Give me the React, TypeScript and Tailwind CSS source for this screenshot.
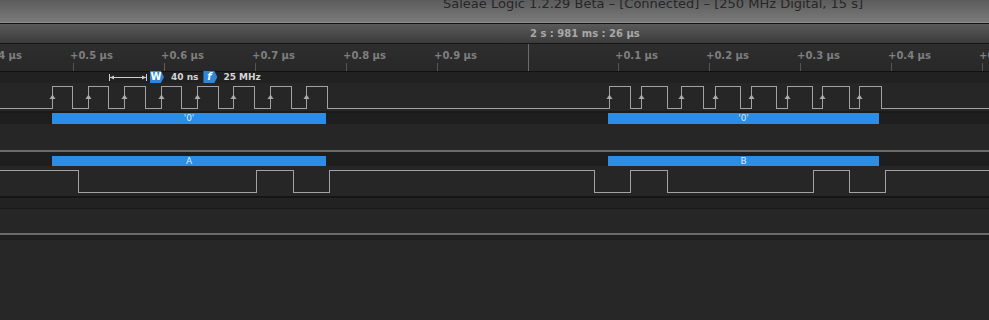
import React from "react";

const WIDTH = 989;

// toggle points (x) of each trace, taken from the capture
const clockEdges = [
  52, 72, 88, 108, 124, 145, 161, 181, 197, 218, 233, 254, 270, 291, 306, 327,
  609, 630, 641, 667, 681, 703, 715, 740, 751, 776, 787, 812, 822, 849, 859, 881,
];
const dataEdges = [78, 256, 293, 329, 594, 630, 667, 813, 849, 885];

function wavePath(edges: number[], startHigh: boolean, hi: number, lo: number) {
  let level = startHigh;
  let d = `M0 ${level ? hi : lo}`;
  for (const x of edges) {
    level = !level;
    d += ` H${x + 0.5} V${level ? hi : lo}`;
  }
  return d + ` H${WIDTH}`;
}

const ticks = [
  { label: "+0.4 µs" },
  { label: "+0.5 µs" },
  { label: "+0.6 µs" },
  { label: "+0.7 µs" },
  { label: "+0.8 µs" },
  { label: "+0.9 µs" },
  { label: "", cursor: true },
  { label: "+0.1 µs" },
  { label: "+0.2 µs" },
  { label: "+0.3 µs" },
  { label: "+0.4 µs" },
  { label: "+0.5 µs" },
];

function Ruler() {
  return (
    <div className="flex h-[27px] bg-gradient-to-b from-[#2e2e2e] to-[#282828] overflow-hidden">
      {ticks.map((t, i) => (
        <div
          key={i}
          className={`relative flex flex-col shrink-0 h-full ${i === 0 ? "-ml-[18px]" : ""} ${t.cursor ? "w-[90px]" : "w-[91px]"}`}
        >
          {t.cursor ? (
            <div className="w-px h-full bg-[#6c6c6c]" />
          ) : (
            <>
              <span className="mt-[7px] -ml-[3px] text-[10px] leading-[10px] font-bold text-[#7f7f7f] whitespace-nowrap">
                {t.label}
              </span>
              <div className={`mt-auto w-px h-[8px] ${i === 2 ? "bg-[#6b5a48]" : "bg-[#555555]"}`} />
            </>
          )}
        </div>
      ))}
    </div>
  );
}

function Badge({ children, italic }: { children: React.ReactNode; italic?: boolean }) {
  return (
    <div
      className={`flex items-center justify-center w-[14px] h-[12px] pr-[2px] bg-[#2d86d8] text-white text-[10px] font-bold leading-none [clip-path:polygon(0_0,78%_0,100%_50%,78%_100%,0_100%)] ${italic ? "italic" : ""}`}
    >
      {children}
    </div>
  );
}

function Measure() {
  return (
    <div className="flex items-center h-[11px] bg-[#212121] pl-[109px] text-[9px] font-bold text-[#d4d4d4]">
      <svg width="38" height="7" viewBox="0 0 38 7">
        <path d="M0.5 0 V7 M37.5 0 V7 M1 3.5 H37" stroke="#cfcfcf" strokeWidth="1" />
        <path d="M1 3.5 L5 1.5 V5.5 Z M37 3.5 L33 1.5 V5.5 Z" fill="#cfcfcf" />
      </svg>
      <div className="ml-[3px] -mt-[1px]">
        <Badge>W</Badge>
      </div>
      <span className="ml-[7px]">40 ns</span>
      <div className="ml-[5px] -mt-[1px]">
        <Badge italic>f</Badge>
      </div>
      <span className="ml-[6px]">25 MHz</span>
    </div>
  );
}

function ClockTrace() {
  const rising = clockEdges.filter((_, i) => i % 2 === 0);
  return (
    <svg width={WIDTH} height="28" className="block" shapeRendering="crispEdges">
      <path d={wavePath(clockEdges, false, 3.5, 25.5)} fill="none" stroke="#a2a2a2" strokeWidth="1" />
      {rising.map((x) => (
        <path
          key={x}
          d={`M${x + 0.5} 11.5 L${x + 3.5} 16 H${x - 2.5} Z`}
          fill="#ababab"
          shapeRendering="auto"
        />
      ))}
    </svg>
  );
}

function DataTrace() {
  return (
    <svg width={WIDTH} height="30" className="block" shapeRendering="crispEdges">
      <path d={wavePath(dataEdges, true, 4.5, 26.5)} fill="none" stroke="#a2a2a2" strokeWidth="1" />
    </svg>
  );
}

function Frame({ width, label }: { width: string; label: string }) {
  return (
    <div
      className={`${width} shrink-0 h-full bg-[#2b8de6] flex items-center justify-center text-[9px] leading-none text-[#d9ecff]`}
    >
      {label}
    </div>
  );
}

export default function App() {
  return (
    <div
      className="w-[989px] h-[320px] overflow-hidden flex flex-col bg-[#262626]"
      style={{ fontFamily: '"DejaVu Sans", "Liberation Sans", sans-serif' }}
    >
      {/* window title */}
      <div className="h-[22px] shrink-0 bg-gradient-to-b from-[#5c5c5c] to-[#7a7a7a] pl-[443px] overflow-hidden">
        <div className="-mt-[3px] text-[13px] leading-[13px] text-[#262626] whitespace-nowrap">
          Saleae Logic 1.2.29 Beta – [Connected] – [250 MHz Digital, 15 s]
        </div>
      </div>
      <div className="h-px bg-[#8c8c8c]" />
      <div className="h-px bg-[#121212]" />

      {/* time header */}
      <div className="h-[19px] shrink-0 bg-gradient-to-b from-[#5a5a5a] to-[#3b3b3b] pl-[530px] flex items-center">
        <span className="text-[10px] leading-none font-bold text-[#a8a8a8] whitespace-nowrap">
          2 s : 981 ms : 26 µs
        </span>
      </div>
      <div className="h-px bg-[#151515]" />

      <Ruler />
      <div className="h-px bg-[#111111]" />
      <Measure />

      {/* channel 0: clock */}
      <div className="h-[28px] shrink-0">
        <ClockTrace />
      </div>
      <div className="h-[2px] bg-[#1a1a1a]" />
      <div className="h-[11px] shrink-0 bg-[#1e1e1e] flex">
        <div className="w-[52px] shrink-0" />
        <Frame width="w-[274px]" label="'0'" />
        <div className="w-[282px] shrink-0" />
        <Frame width="w-[271px]" label="'0'" />
      </div>
      <div className="h-[26px] shrink-0" />
      <div className="h-[2px] bg-[#6a6a6a]" />

      {/* channel 1: data */}
      <div className="h-[14px] shrink-0 bg-[#1e1e1e] flex items-end">
        <div className="h-[10px] w-full flex">
          <div className="w-[52px] shrink-0" />
          <Frame width="w-[274px]" label="A" />
          <div className="w-[282px] shrink-0" />
          <Frame width="w-[271px]" label="B" />
        </div>
      </div>
      <div className="h-[30px] shrink-0">
        <DataTrace />
      </div>
      <div className="h-[2px] bg-[#151515]" />
      <div className="h-[10px] shrink-0 bg-[#222222]" />
      <div className="h-px bg-[#181818]" />
      <div className="h-[24px] shrink-0" />
      <div className="h-[2px] bg-[#6a6a6a]" />
      <div className="h-[5px] shrink-0 bg-[#1e1e1e]" />
      <div className="flex-1 bg-[#272727]" />
    </div>
  );
}
